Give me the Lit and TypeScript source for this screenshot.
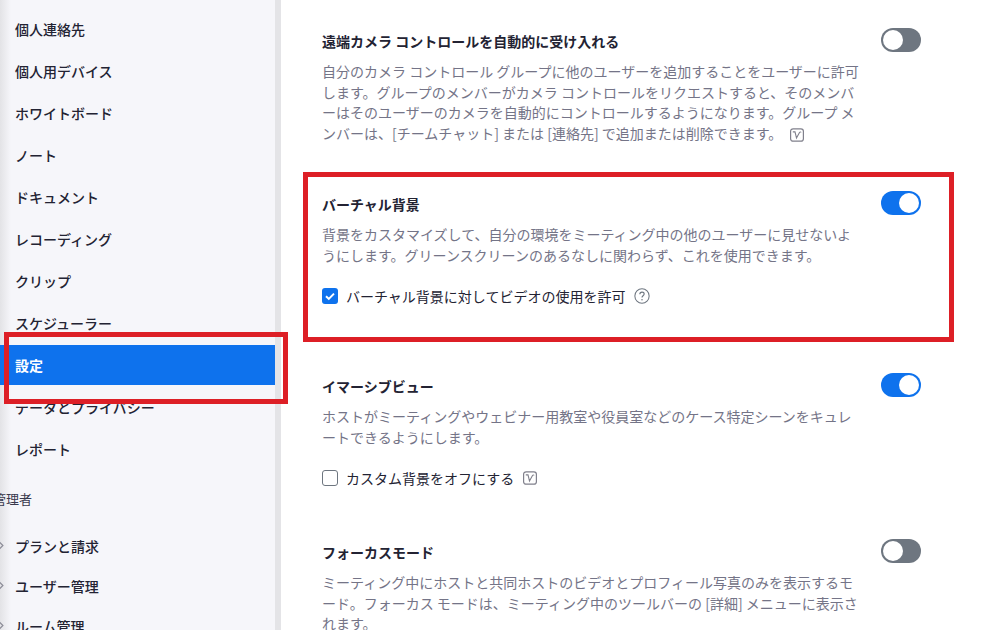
import { LitElement, html, css, svg } from 'lit';
import { customElement } from 'lit/decorators.js';

const vIcon = svg`<svg class="vicon" width="14" height="14" viewBox="0 0 14 14" fill="none">
  <rect x="0.6" y="0.8" width="12.8" height="12.4" rx="2.5" stroke="#80808c" stroke-width="1.2"/>
  <path d="M2.8 3.9h2.2l1.5 6 3-5.4c.5-.8 1.4-.7 1.4.1M10.8 7v.1M10.3 10h.1" stroke="#80808c" stroke-width="1.1"/>
</svg>`;

const helpIcon = svg`<svg class="help" width="16" height="16" viewBox="0 0 17 17" fill="none">
  <circle cx="8.5" cy="8.5" r="7.6" stroke="#6e7680" stroke-width="1.1"/>
  <path d="M6.2 6.6c0-1.4 1-2.2 2.3-2.2s2.3.8 2.3 2c0 1.8-2.3 1.8-2.3 3.6" stroke="#6e7680" stroke-width="1.2"/>
  <circle cx="8.5" cy="12.4" r=".8" fill="#6e7680"/>
</svg>`;

@customElement('app-root')
export class AppRoot extends LitElement {
  static styles = css`
    :host {
      display: block;
      position: relative;
      width: 1004px;
      height: 630px;
      overflow: hidden;
      background: #fff;
      font-family: "Noto Sans CJK JP", "Noto Sans", sans-serif;
    }
    .page {
      display: flex;
      height: 630px;
    }
    .sidebar {
      width: 275px;
      flex: none;
      overflow: hidden;
      padding-top: 9px;
      box-sizing: border-box;
      background: linear-gradient(to right, #e3e3e6 0, #f6f6fa 11px);
    }
    .item {
      display: flex;
      align-items: center;
      height: 40px;
      margin-bottom: 2px;
      padding-left: 15px;
      font-size: 14px;
      font-weight: 500;
      color: #232333;
    }
    .item.active {
      background: #0e72ed;
      color: #fff;
      font-weight: 700;
    }
    .group {
      margin: 19px 0 17px -7px;
      height: 21px;
      line-height: 21px;
      font-size: 13px;
      color: #39394d;
    }
    .sub {
      position: relative;
      margin-bottom: 0;
    }
    .sub svg {
      position: absolute;
      left: -2px;
      top: 15px;
    }
    .rail {
      width: 6px;
      flex: none;
      background: #e4e4e7;
    }
    .main {
      flex: 1;
      padding: 28px 83px 0 41px;
    }
    .setting {
      margin-bottom: 48px;
    }
    .setting.roomy {
      margin-bottom: 65px;
    }
    .setting.snug {
      margin-bottom: 49px;
    }
    .head {
      display: flex;
      justify-content: space-between;
      align-items: center;
      height: 24px;
    }
    .title {
      padding-top: 2px;
      font-size: 14px;
      font-weight: 700;
      color: #232333;
    }
    .desc {
      width: 540px;
      margin: 9px 0 0;
      font-size: 14px;
      line-height: 20.5px;
      color: #747487;
    }
    .toggle {
      width: 40px;
      height: 24px;
      border-radius: 12px;
      box-sizing: border-box;
      padding: 2px;
      display: flex;
      background: #6e7680;
    }
    .toggle.on {
      background: #0e72ed;
      justify-content: flex-end;
    }
    .toggle span {
      width: 20px;
      height: 20px;
      border-radius: 50%;
      background: #fff;
    }
    .check {
      display: flex;
      align-items: center;
      gap: 8px;
      margin-top: 19px;
      height: 24px;
      font-size: 14px;
      color: #232333;
    }
    .box {
      width: 16px;
      height: 16px;
      box-sizing: border-box;
      border-radius: 3px;
      border: 1px solid #6e7680;
      background: #fff;
      flex: none;
    }
    .box.on {
      border: none;
      background: #0e72ed;
    }
    .box svg {
      display: block;
    }
    .help,
    .vicon {
      margin-left: 1px;
      flex: none;
    }
    .desc .vicon {
      vertical-align: -3px;
      margin-left: 8px;
    }
    .mark {
      position: absolute;
      box-sizing: border-box;
      border: 5px solid #dd1f26;
      pointer-events: none;
    }
    .mark.nav {
      left: 4px;
      top: 332px;
      width: 284px;
      height: 72px;
    }
    .mark.panel {
      left: 303px;
      top: 172px;
      width: 651px;
      height: 170px;
    }
  `;

  renderChevron() {
    return svg`<svg width="7" height="9" viewBox="0 0 7 9" fill="none"><path d="M1.5 1l3.4 3.5L1.5 8" stroke="#8b8b96" stroke-width="1.2"/></svg>`;
  }

  render() {
    const nav = ['個人連絡先', '個人用デバイス', 'ホワイトボード', 'ノート', 'ドキュメント', 'レコーディング', 'クリップ', 'スケジューラー'];
    return html`
      <div class="page">
        <nav class="sidebar">
          ${nav.map((n) => html`<div class="item">${n}</div>`)}
          <div class="item active">設定</div>
          <div class="item">データとプライバシー</div>
          <div class="item">レポート</div>
          <div class="group">管理者</div>
          <div class="item sub">${this.renderChevron()}プランと請求</div>
          <div class="item sub">${this.renderChevron()}ユーザー管理</div>
          <div class="item sub">${this.renderChevron()}ルーム管理</div>
        </nav>
        <div class="rail"></div>
        <main class="main">
          <section class="setting">
            <div class="head">
              <div class="title">遠端カメラ コントロールを自動的に受け入れる</div>
              <div class="toggle"><span></span></div>
            </div>
            <p class="desc">自分のカメラ コントロール グループに他のユーザーを追加することをユーザーに許可します。グループのメンバーがカメラ コントロールをリクエストすると、そのメンバーはそのユーザーのカメラを自動的にコントロールするようになります。グループ メンバーは、[チームチャット] または [連絡先] で追加または削除できます。${vIcon}</p>
          </section>
          <section class="setting roomy">
            <div class="head">
              <div class="title">バーチャル背景</div>
              <div class="toggle on"><span></span></div>
            </div>
            <p class="desc">背景をカスタマイズして、自分の環境をミーティング中の他のユーザーに見せないようにします。グリーンスクリーンのあるなしに関わらず、これを使用できます。</p>
            <div class="check">
              <span class="box on"><svg width="16" height="16" viewBox="0 0 16 16" fill="none"><path d="M4 8.2l2.8 2.7L12 5.6" stroke="#fff" stroke-width="2"/></svg></span>
              バーチャル背景に対してビデオの使用を許可
              ${helpIcon}
            </div>
          </section>
          <section class="setting snug">
            <div class="head">
              <div class="title">イマーシブビュー</div>
              <div class="toggle on"><span></span></div>
            </div>
            <p class="desc">ホストがミーティングやウェビナー用教室や役員室などのケース特定シーンをキュレートできるようにします。</p>
            <div class="check"><span class="box"></span>カスタム背景をオフにする ${vIcon}</div>
          </section>
          <section class="setting">
            <div class="head">
              <div class="title">フォーカスモード</div>
              <div class="toggle"><span></span></div>
            </div>
            <p class="desc">ミーティング中にホストと共同ホストのビデオとプロフィール写真のみを表示するモード。フォーカス モードは、ミーティング中のツールバーの [詳細] メニューに表示されます。</p>
          </section>
        </main>
      </div>
      <div class="mark nav"></div>
      <div class="mark panel"></div>
    `;
  }
}
